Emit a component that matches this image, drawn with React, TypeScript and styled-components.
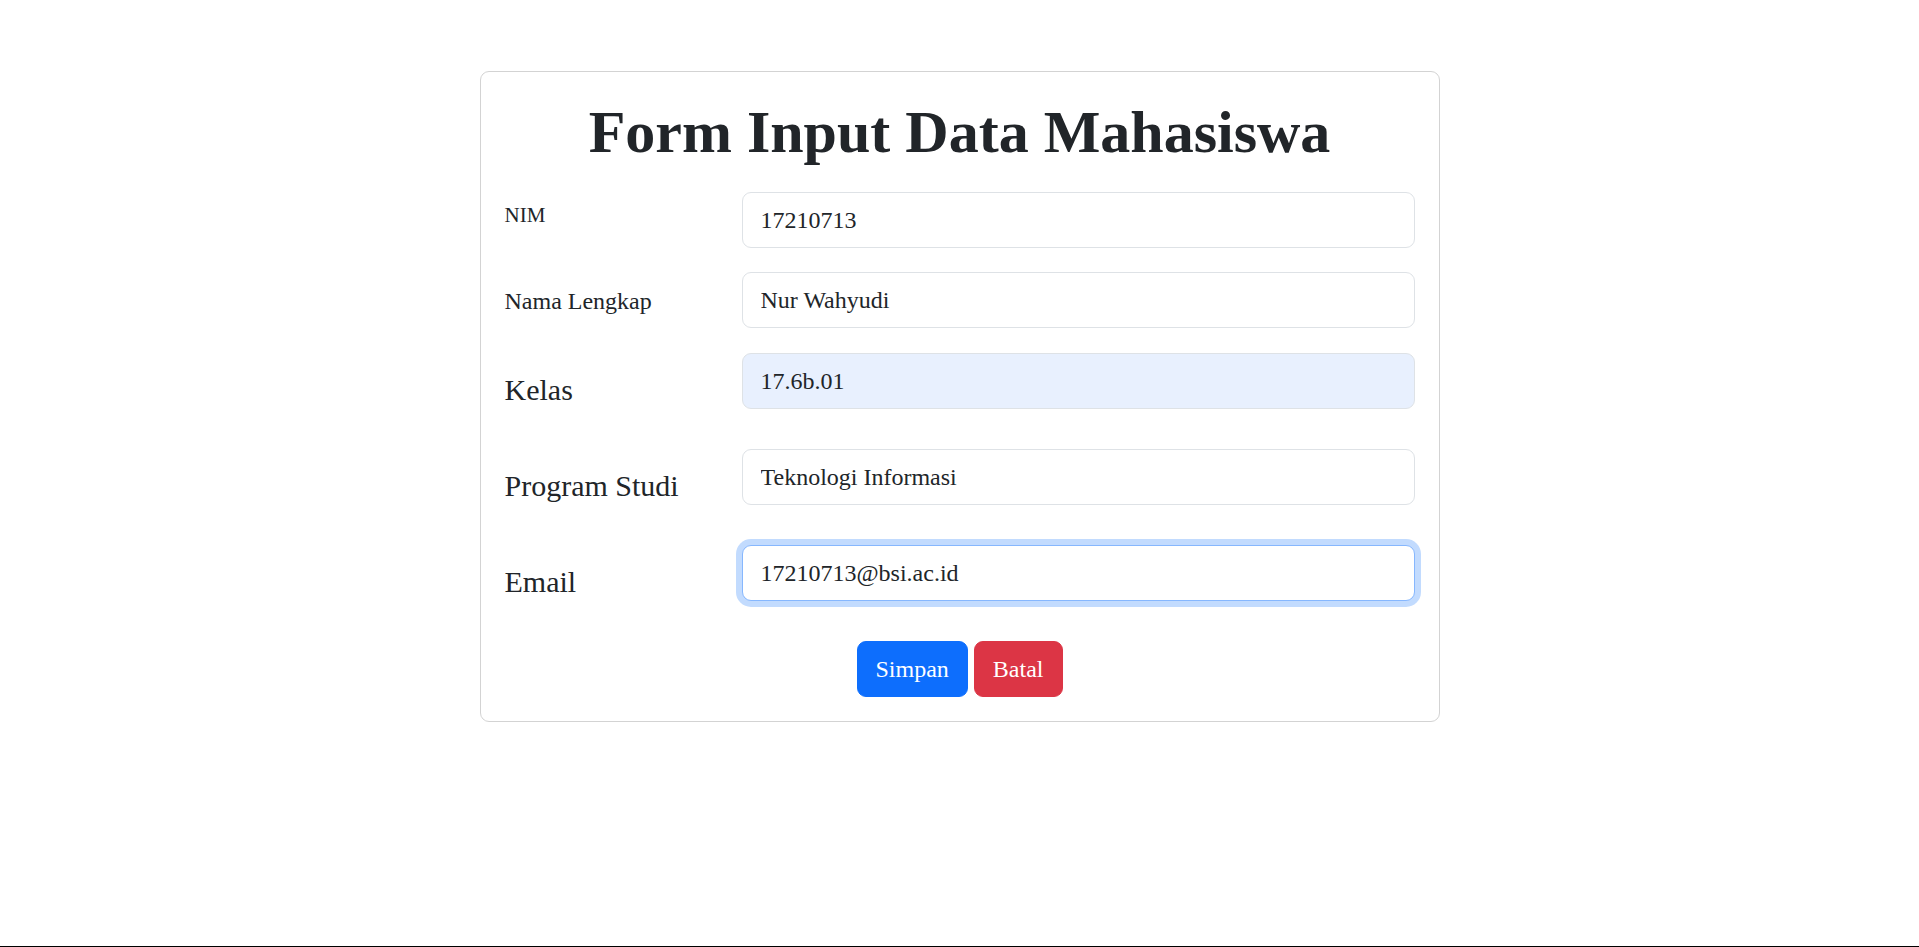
import React from "react";
import styled, { createGlobalStyle, css } from "styled-components";

const GlobalStyle = createGlobalStyle`
  *, *::before, *::after { box-sizing: border-box; }
  html, body { margin: 0; padding: 0; background: #fff; }
  body {
    font-family: "Liberation Serif", "Times New Roman", serif;
    color: #212529;
    font-size: 24px;
    line-height: 1.5;
  }
`;

const Page = styled.div`
  min-height: 100vh;
  padding-top: 71px;
  border-bottom: 1px solid #000;
`;

const Card = styled.div`
  width: 960px;
  margin: 0 auto;
  border: 1px solid #d3d3d3;
  border-radius: 9px;
  padding: 24px;
  background: #fff;
`;

const Title = styled.h1`
  margin: 0 0 24px;
  font-size: 60px;
  line-height: 72px;
  font-weight: 700;
  text-align: center;
  color: #212529;
`;

const Row = styled.div`
  display: grid;
  grid-template-columns: 201px 1fr;
  column-gap: 36px;
  align-items: start;
  margin-bottom: 24px;
`;

type Size = "sm" | "md" | "lg";

const Label = styled.label<{ $size: Size }>`
  display: block;
  margin: 0;
  ${({ $size }) =>
    $size === "sm"
      ? css`
          font-size: 21px;
          line-height: 31.5px;
          padding: 7.5px 0;
        `
      : $size === "lg"
      ? css`
          font-size: 30px;
          line-height: 45px;
          padding: 13.5px 0;
        `
      : css`
          font-size: 24px;
          line-height: 36px;
          padding: 10.5px 0;
        `}
`;

const Input = styled.input<{ $filled?: boolean; $focus?: boolean }>`
  display: block;
  width: 100%;
  height: 56px;
  padding: 9px 18px;
  font-family: "Liberation Serif", "Times New Roman", serif;
  font-size: 24px;
  line-height: 36px;
  color: #212529;
  background: ${({ $filled }) => ($filled ? "#e8f0fe" : "#fff")};
  border: 1px solid ${({ $focus }) => ($focus ? "#86b7fe" : "#dee2e6")};
  border-radius: 9px;
  outline: none;
  box-shadow: ${({ $focus }) =>
    $focus ? "0 0 0 6px rgba(13, 110, 253, 0.25)" : "none"};
`;

const Actions = styled.div`
  display: flex;
  justify-content: center;
  gap: 6px;
`;

const Button = styled.button<{ $variant: "primary" | "danger" }>`
  font-family: "Liberation Serif", "Times New Roman", serif;
  font-size: 24px;
  line-height: 36px;
  padding: 9px 18px;
  border-radius: 9px;
  color: #fff;
  cursor: pointer;
  border: 1px solid ${({ $variant }) => ($variant === "primary" ? "#0d6efd" : "#dc3545")};
  background: ${({ $variant }) => ($variant === "primary" ? "#0d6efd" : "#dc3545")};
`;

const fields: { id: string; label: string; value: string; size: Size; filled?: boolean; focus?: boolean }[] = [
  { id: "nim", label: "NIM", value: "17210713", size: "sm" },
  { id: "nama", label: "Nama Lengkap", value: "Nur Wahyudi", size: "md" },
  { id: "kelas", label: "Kelas", value: "17.6b.01", size: "lg", filled: true },
  { id: "prodi", label: "Program Studi", value: "Teknologi Informasi", size: "lg" },
  { id: "email", label: "Email", value: "17210713@bsi.ac.id", size: "lg", focus: true },
];

export default function App() {
  return (
    <>
      <GlobalStyle />
      <Page>
        <Card>
          <Title>Form Input Data Mahasiswa</Title>
          <form onSubmit={(e) => e.preventDefault()}>
            {fields.map((f) => (
              <Row key={f.id}>
                <Label htmlFor={f.id} $size={f.size}>
                  {f.label}
                </Label>
                <Input
                  id={f.id}
                  type="text"
                  defaultValue={f.value}
                  $filled={f.filled}
                  $focus={f.focus}
                />
              </Row>
            ))}
            <Actions>
              <Button type="submit" $variant="primary">Simpan</Button>
              <Button type="reset" $variant="danger">Batal</Button>
            </Actions>
          </form>
        </Card>
      </Page>
    </>
  );
}
